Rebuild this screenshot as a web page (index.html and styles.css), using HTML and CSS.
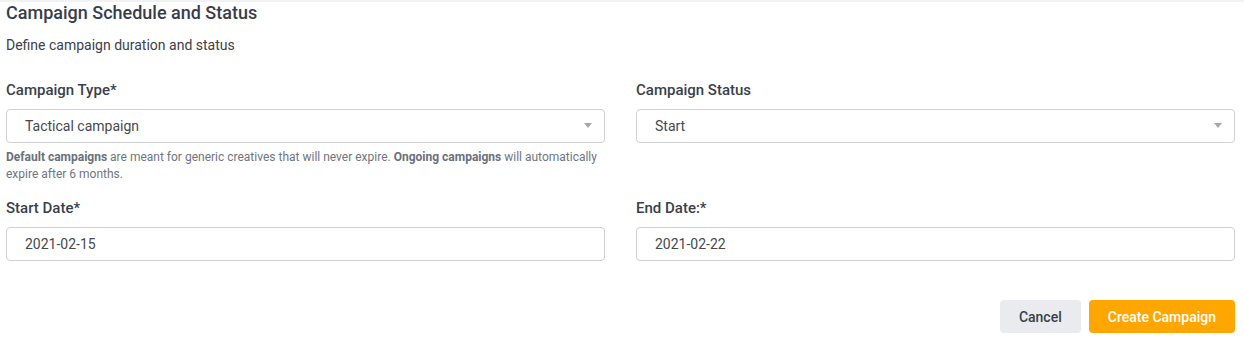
FILE: index.html
```html
<!DOCTYPE html>
<html lang="en">
<head>
<meta charset="utf-8">
<title>Campaign Schedule and Status</title>
<link rel="stylesheet" href="styles.css">
</head>
<body>
<div class="topbar"></div>
<main class="page">
  <h1 class="title">Campaign Schedule and Status</h1>
  <p class="subtitle">Define campaign duration and status</p>
  <div class="grid">
    <div class="field">
      <label class="label">Campaign Type*</label>
      <div class="control select">
        <span>Tactical campaign</span>
        <span class="caret"></span>
      </div>
      <p class="help"><b>Default campaigns</b> are meant for generic creatives that will never expire. <b>Ongoing campaigns</b> will automatically expire after 6 months.</p>
    </div>
    <div class="field">
      <label class="label">Campaign Status</label>
      <div class="control select">
        <span>Start</span>
        <span class="caret"></span>
      </div>
    </div>
    <div class="field">
      <label class="label">Start Date*</label>
      <div class="control"><span>2021-02-15</span></div>
    </div>
    <div class="field">
      <label class="label">End Date:*</label>
      <div class="control"><span>2021-02-22</span></div>
    </div>
  </div>
  <div class="actions">
    <button class="btn btn-cancel">Cancel</button>
    <button class="btn btn-primary">Create Campaign</button>
  </div>
</main>
</body>
</html>
```
FILE: styles.css
```css
* { box-sizing: border-box; }
html, body { margin: 0; background: #fff; }
body {
  font-family: Roboto, "Noto Sans", Arial, sans-serif;
  color: #3a3f4a;
}
.topbar {
  height: 2px;
  background: #f1f2f4;
}
.page {
  padding: 0 9px 0 6px;
  margin-top: -2px;
}
.title {
  margin: 0;
  font-size: 18px;
  font-weight: 500;
  line-height: 26px;
  color: #383d4a;
}
.subtitle {
  margin: 9px 0 0;
  font-size: 14px;
  line-height: 20px;
  color: #3c4048;
}
.grid {
  margin-top: 25px;
  display: grid;
  grid-template-columns: 1fr 1fr;
  column-gap: 31px;
  row-gap: 15px;
  align-items: start;
}
.label {
  display: block;
  font-size: 15px;
  font-weight: 500;
  line-height: 20px;
  color: #3a3f4b;
}
.control {
  margin-top: 9px;
  height: 34px;
  border: 1px solid #cfd1d4;
  border-radius: 4px;
  padding: 0 12px 0 18px;
  display: flex;
  align-items: center;
  justify-content: space-between;
  font-size: 14px;
  color: #444950;
}
.caret {
  width: 0;
  height: 0;
  border-left: 4px solid transparent;
  border-right: 4px solid transparent;
  border-top: 5px solid #a4a7ab;
  margin-top: -2px;
}
.help {
  margin: 6px 0 0;
  font-size: 12px;
  line-height: 17px;
  color: #6f7580;
}
.help b { font-weight: 700; color: #6a707b; }
.actions {
  margin-top: 39px;
  display: flex;
  justify-content: flex-end;
  gap: 8px;
}
.btn {
  height: 33px;
  border: 0;
  border-radius: 4px;
  font-family: inherit;
  font-size: 14px;
  font-weight: 500;
  padding: 0 19px;
  cursor: pointer;
}
.btn-cancel {
  background: #e9ebef;
  color: #3a3f4a;
}
.btn-primary {
  background: #ffa600;
  color: #fff;
}
```
